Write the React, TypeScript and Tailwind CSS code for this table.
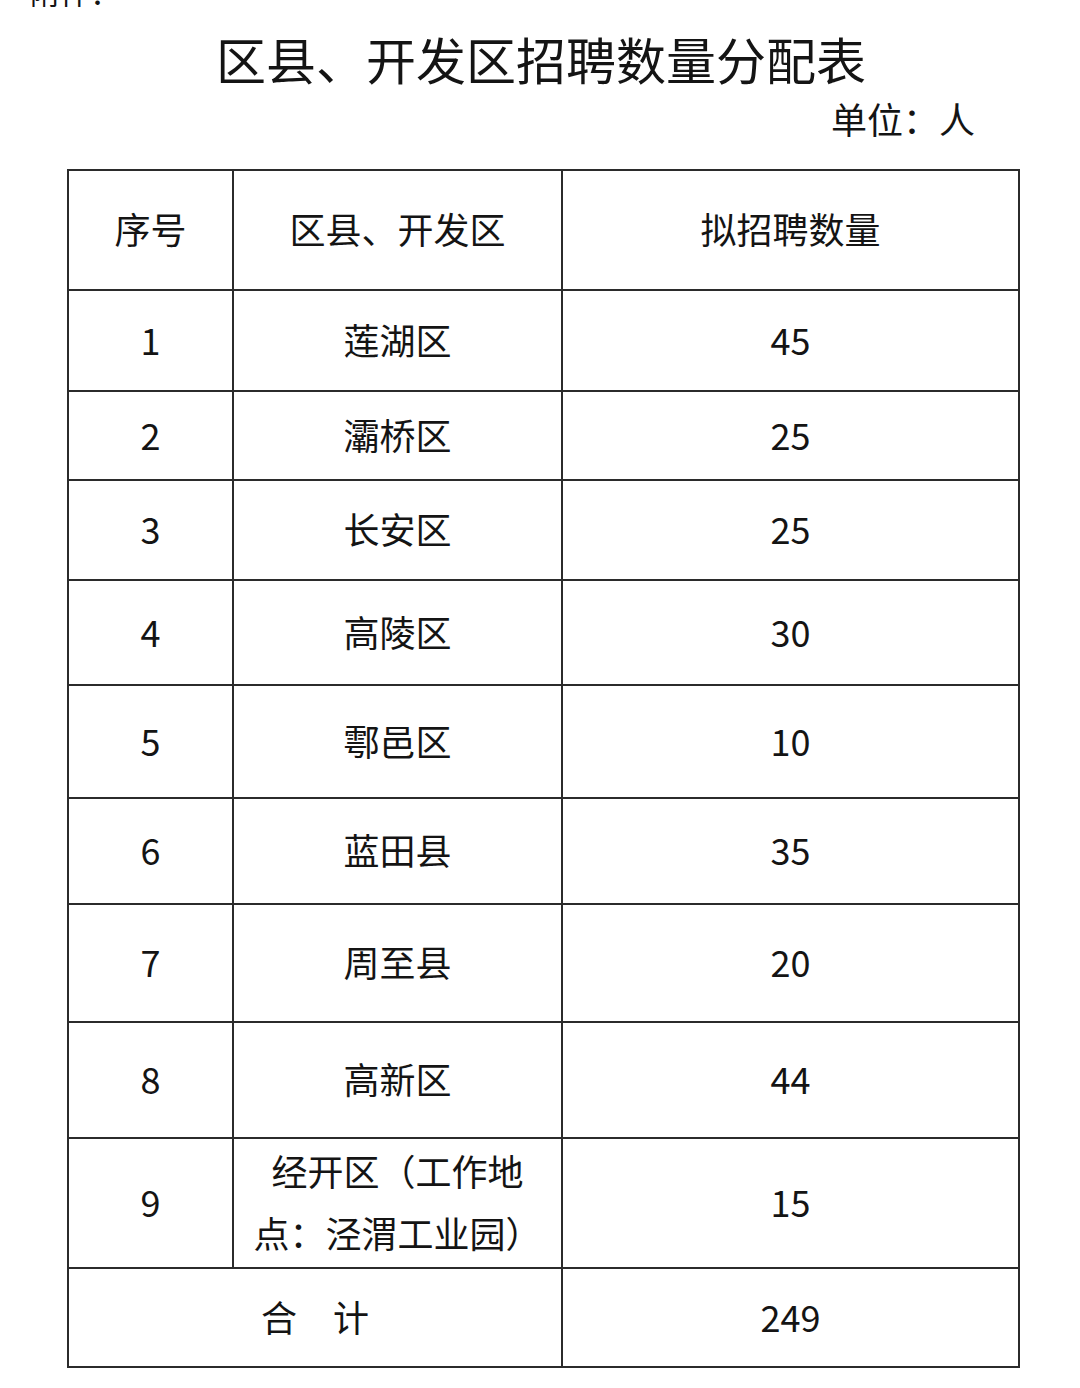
const rows: { no: string; area: React.ReactNode; count: string; h: string }[] = [
  { no: '1', area: '莲湖区', count: '45', h: 'h-[101px]' },
  { no: '2', area: '灞桥区', count: '25', h: 'h-[89px]' },
  { no: '3', area: '长安区', count: '25', h: 'h-[100px]' },
  { no: '4', area: '高陵区', count: '30', h: 'h-[105px]' },
  { no: '5', area: '鄠邑区', count: '10', h: 'h-[113px]' },
  { no: '6', area: '蓝田县', count: '35', h: 'h-[106px]' },
  { no: '7', area: '周至县', count: '20', h: 'h-[118px]' },
  { no: '8', area: '高新区', count: '44', h: 'h-[116px]' },
  {
    no: '9',
    area: (
      <span className="block leading-[62px]">
        经开区（工作地
        <br />
        点：泾渭工业园）
      </span>
    ),
    count: '15',
    h: 'h-[130px]',
  },
];

const cell = 'border-2 border-[#2b2b2b] text-center align-middle px-0 pt-0 pb-[4px]';

export default function App() {
  return (
    <div className="w-[1080px] h-[1388px] bg-white text-[#141414] font-['Noto_Sans_CJK_SC','Noto_Sans',sans-serif]">
      <div className="h-[7px] overflow-hidden pl-[30px]">
        <div className="mt-[-27px] text-[30px] leading-[36px]">附件：</div>
      </div>

      <h1 className="mt-[21px] text-center text-[50px] leading-[60px] font-normal pl-[2px]">
        区县、开发区招聘数量分配表
      </h1>

      <div className="mt-[10px] pr-[105px] text-right text-[36px] leading-[40px]">单位：人</div>

      <table className="mt-[31px] ml-[67px] w-[953px] table-fixed border-collapse text-[36px] leading-[40px]">
        <colgroup>
          <col className="w-[165px]" />
          <col className="w-[329px]" />
          <col />
        </colgroup>
        <tbody>
          <tr className="h-[120px]">
            <td className={cell}>序号</td>
            <td className={cell}>区县、开发区</td>
            <td className={cell}>拟招聘数量</td>
          </tr>
          {rows.map((r) => (
            <tr key={r.no} className={r.h}>
              <td className={cell}>{r.no}</td>
              <td className={cell}>{r.area}</td>
              <td className={cell}>{r.count}</td>
            </tr>
          ))}
          <tr className="h-[99px]">
            <td colSpan={2} className={cell}>
              合　计
            </td>
            <td className={cell}>249</td>
          </tr>
        </tbody>
      </table>
    </div>
  );
}
